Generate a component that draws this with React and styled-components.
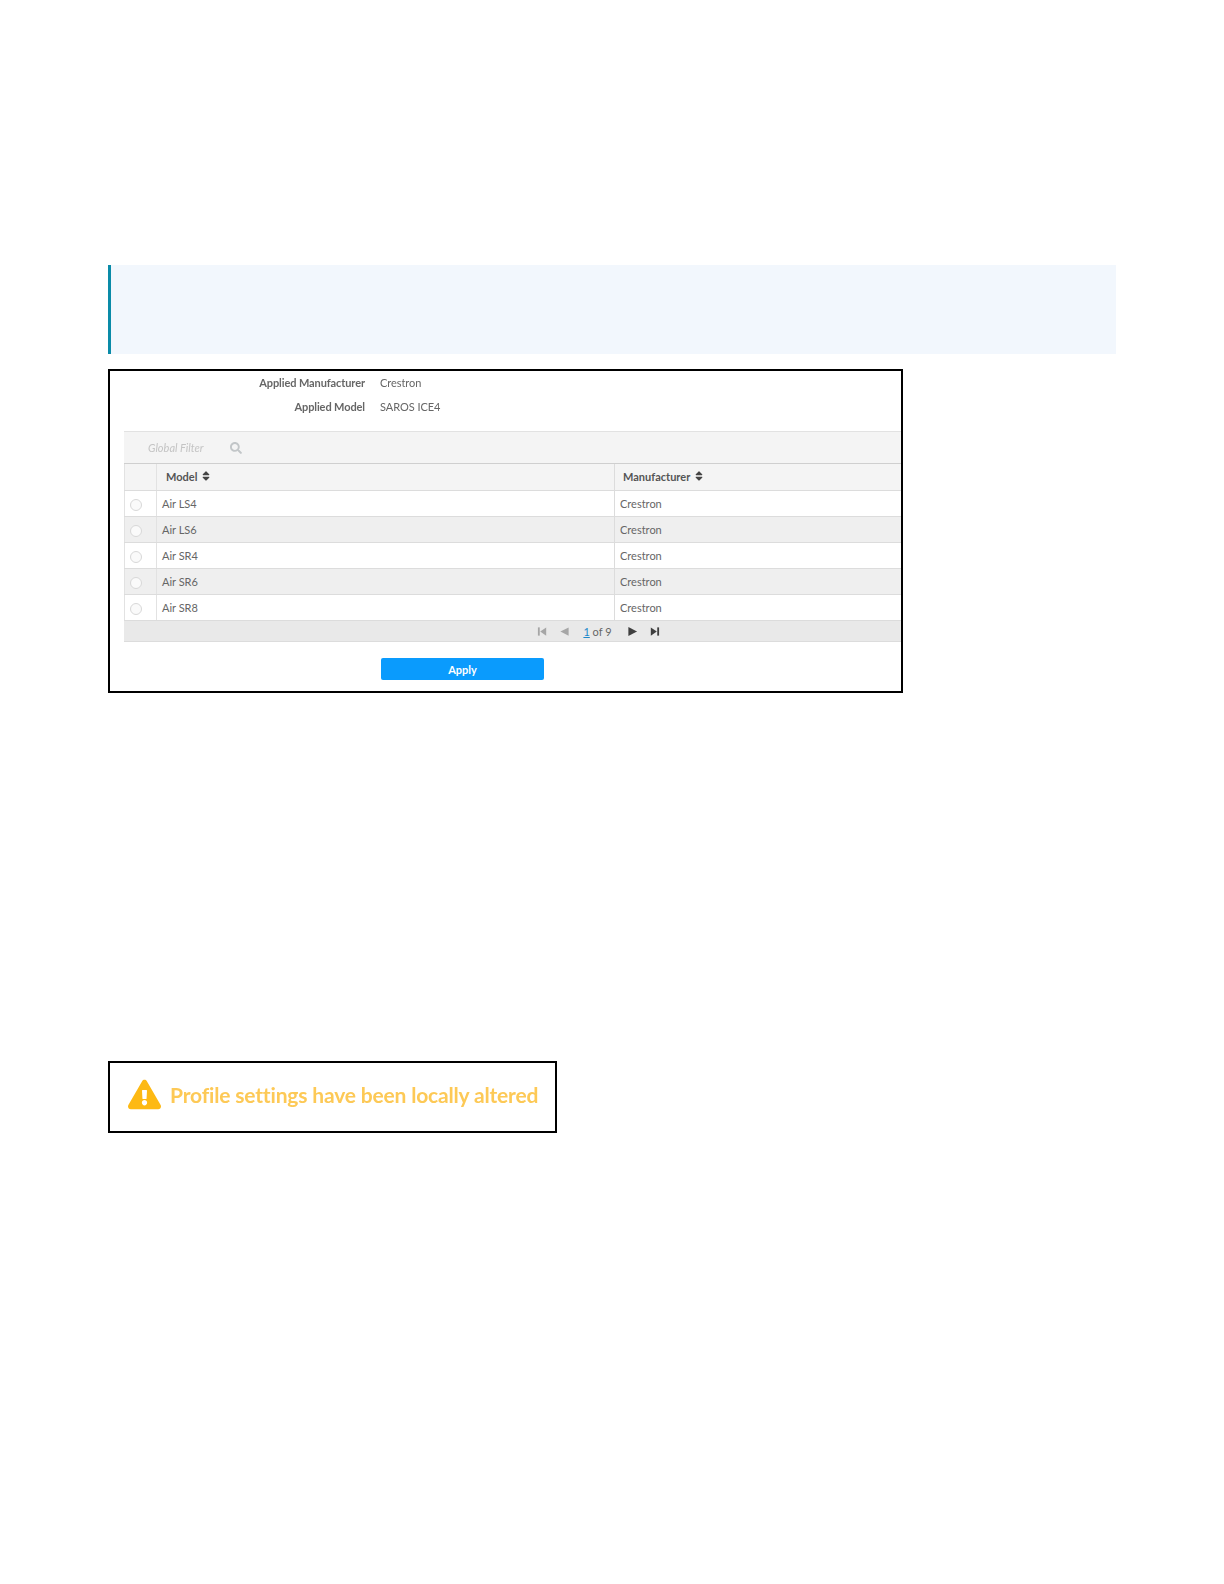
import React from 'react'
import styled, { createGlobalStyle } from 'styled-components'
import { FaExclamationTriangle, FaSearch, FaSort } from 'react-icons/fa'

const GlobalStyle = createGlobalStyle`
  html, body {
    margin: 0;
    background: #fff;
  }
  body {
    font-family: Lato, "Open Sans", sans-serif;
  }
`

const models = ['Air LS4', 'Air LS6', 'Air SR4', 'Air SR6', 'Air SR8']

const PagerIcon = ({ dir, end, dim }) => (
  <PagerSvg viewBox="0 0 12 12" $dim={dim}>
    {dir === 'left' ? (
      <>
        {end && <rect x="1" y="1.5" width="2" height="9" />}
        <path d={end ? 'M10 1.5v9L3.5 6z' : 'M10.5 1.5v9L1.5 6z'} />
      </>
    ) : (
      <>
        <path d={end ? 'M2 1.5v9L8.5 6z' : 'M1.5 1v10L11 6z'} />
        {end && <rect x="9" y="1.5" width="2" height="9" />}
      </>
    )}
  </PagerSvg>
)

function App() {
  return (
    <Page>
      <GlobalStyle />
      <Callout />

      <Panel>
        <Applied>
          <AppliedLabel>Applied Manufacturer</AppliedLabel>
          <AppliedValue>Crestron</AppliedValue>
          <AppliedLabel>Applied Model</AppliedLabel>
          <AppliedValue>SAROS ICE4</AppliedValue>
        </Applied>

        <Table>
          <Toolbar>
            <FilterText>Global Filter</FilterText>
            <FaSearch />
          </Toolbar>

          <HeadRow>
            <RadioCell />
            <ModelCell>
              <HeadText>Model</HeadText>
              <FaSort />
            </ModelCell>
            <MakerCell>
              <HeadText>Manufacturer</HeadText>
              <FaSort />
            </MakerCell>
          </HeadRow>

          {models.map((model, i) => (
            <Row key={model} $odd={i % 2 === 1}>
              <RadioCell>
                <Radio />
              </RadioCell>
              <BodyCell>{model}</BodyCell>
              <BodyCell>Crestron</BodyCell>
            </Row>
          ))}

          <Pager>
            <PagerIcon dir="left" end dim />
            <PagerIcon dir="left" dim />
            <PageText>
              <PageLink>1</PageLink> of 9
            </PageText>
            <PagerIcon dir="right" />
            <PagerIcon dir="right" end />
          </Pager>
        </Table>

        <ApplyRow>
          <ApplyButton>Apply</ApplyButton>
        </ApplyRow>
      </Panel>

      <Alert>
        <FaExclamationTriangle />
        <AlertText>Profile settings have been locally altered</AlertText>
      </Alert>
    </Page>
  )
}

const Page = styled.div`
  padding: 265px 0 0 108px;
  height: 1584px;
  box-sizing: border-box;
`

const Callout = styled.div`
  width: 1008px;
  height: 89px;
  box-sizing: border-box;
  background: #f2f7fd;
  border-left: 3px solid #0a8ba8;
`

const Panel = styled.div`
  width: 795px;
  height: 324px;
  margin-top: 15px;
  box-sizing: border-box;
  border: 2px solid #000;
  padding-left: 14px;
  display: flex;
  flex-direction: column;
  filter: blur(0.3px);
`

const Applied = styled.div`
  display: grid;
  grid-template-columns: 241px auto;
  column-gap: 15px;
  row-gap: 10px;
  justify-content: start;
  box-sizing: border-box;
  padding-top: 5px;
  height: 60px;
  align-content: start;
  font-size: 11px;
  line-height: 14px;
`

const AppliedLabel = styled.div`
  text-align: right;
  font-weight: 700;
  letter-spacing: -0.1px;
  color: #666;
`

const AppliedValue = styled.div`
  color: #666;
  letter-spacing: -0.05px;
`

const Table = styled.div`
  display: flex;
  flex-direction: column;
  font-size: 11px;
  color: #666;
`

const Toolbar = styled.div`
  height: 31px;
  display: flex;
  align-items: center;
  gap: 26px;
  padding-left: 24px;
  background: #f4f4f4;
  border-top: 1px solid #e2e2e2;
  border-bottom: 1px solid #cfcfcf;
  svg {
    width: 12px;
    height: 12px;
    color: #c2c6c8;
  }
`

const FilterText = styled.span`
  font-style: italic;
  color: #c4c4c4;
`

const Row = styled.div`
  display: grid;
  grid-template-columns: 33px 457px 1fr;
  height: 26px;
  box-sizing: border-box;
  border-bottom: 1px solid #dcdcdc;
  background: ${p => (p.$odd ? '#efefef' : '#fff')};
`

const HeadRow = styled(Row)`
  height: 27px;
  background: #f4f4f4;
`

const RadioCell = styled.div`
  display: flex;
  align-items: center;
  padding: 2px 0 0 5px;
  border-left: 1px solid #e2e2e2;
  border-right: 1px solid #e2e2e2;
`

const Radio = styled.span`
  width: 10px;
  height: 10px;
  border-radius: 50%;
  border: 1px solid #d8d8d8;
  background: #fafafa;
`

const BodyCell = styled.div`
  display: flex;
  align-items: center;
  padding-left: 5px;
  & + & {
    border-left: 1px solid #dcdcdc;
  }
`

const ModelCell = styled.div`
  display: flex;
  align-items: center;
  gap: 3px;
  padding: 0 0 2px 9px;
  svg {
    width: 12px;
    height: 12px;
    color: #444;
  }
`

const MakerCell = styled(ModelCell)`
  padding-left: 8px;
  border-left: 1px solid #dcdcdc;
`

const HeadText = styled.span`
  font-weight: 700;
  color: #555;
`

const Pager = styled.div`
  height: 20px;
  display: flex;
  align-items: center;
  justify-content: center;
  gap: 11px;
  padding-left: 172px;
  background: #e9e9e9;
  border-bottom: 1px solid #dcdcdc;
`

const PagerSvg = styled.svg`
  width: 11px;
  height: 11px;
  fill: ${p => (p.$dim ? '#a6a6a6' : '#3f3f3f')};
`

const PageText = styled.span`
  margin: 0 4px 0 2px;
  color: #666;
`

const PageLink = styled.span`
  color: #1e88c9;
  text-decoration: underline;
`

const ApplyRow = styled.div`
  padding: 16px 0 0 257px;
`

const ApplyButton = styled.button`
  display: block;
  width: 163px;
  height: 22px;
  padding: 0;
  border: 0;
  border-radius: 2px;
  background: #0a9bfd;
  color: #fff;
  font-family: inherit;
  font-size: 11px;
  font-weight: 700;
`

const Alert = styled.div`
  width: 449px;
  height: 72px;
  margin-top: 368px;
  box-sizing: border-box;
  border: 2px solid #000;
  display: flex;
  align-items: center;
  gap: 9px;
  padding-left: 18px;
  filter: blur(0.3px);
  svg {
    width: 33px;
    height: 33px;
    color: #fdb913;
    margin-top: -6px;
  }
`

const AlertText = styled.span`
  font-size: 21px;
  font-weight: 700;
  letter-spacing: -0.17px;
  color: #fdc956;
  margin-top: -5px;
`

export default App
